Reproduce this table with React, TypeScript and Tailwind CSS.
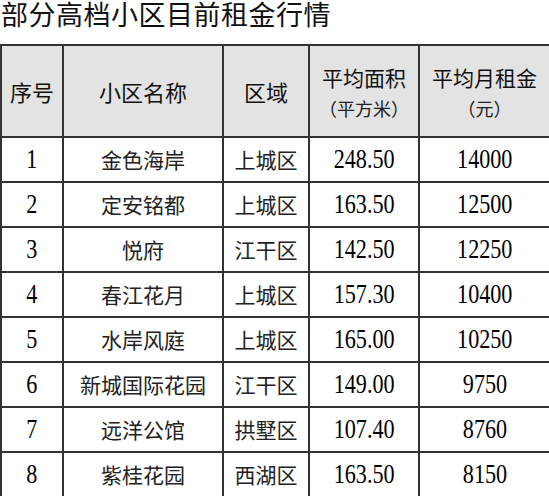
import React from 'react'

const rows = [
  ['1', '金色海岸', '上城区', '248.50', '14000'],
  ['2', '定安铭都', '上城区', '163.50', '12500'],
  ['3', '悦府', '江干区', '142.50', '12250'],
  ['4', '春江花月', '上城区', '157.30', '10400'],
  ['5', '水岸风庭', '上城区', '165.00', '10250'],
  ['6', '新城国际花园', '江干区', '149.00', '9750'],
  ['7', '远洋公馆', '拱墅区', '107.40', '8760'],
  ['8', '紫桂花园', '西湖区', '163.50', '8150'],
]

const cjk = "font-['Noto_Sans_CJK_SC',sans-serif]"
const num = "inline-block scale-x-[0.82] font-['Liberation_Serif',serif] text-[27px] leading-none text-black"

function Num({ v }: { v: string }) {
  return <span className={num}>{v}</span>
}

export default function App() {
  return (
    <main className={`w-[549px] h-[496px] overflow-hidden bg-white ${cjk}`}>
      <h1 className="h-[44px] pl-[1px] text-[27px] leading-[40px] -mt-[6px] mb-[6px] text-[#111] tracking-[0.5px]">部分高档小区目前租金行情</h1>
      <table className="w-[549px] table-fixed border-collapse text-center">
        <colgroup>
          <col className="w-[62px]" />
          <col className="w-[160px]" />
          <col className="w-[86px]" />
          <col className="w-[110px]" />
          <col className="w-[131px]" />
        </colgroup>
        <thead>
          <tr className="h-[92px] bg-[#e3e3e3] text-[22px] text-[#111]">
            <th className="border-2 border-[#333] font-normal">序号</th>
            <th className="border-2 border-[#333] font-normal">小区名称</th>
            <th className="border-2 border-[#333] font-normal">区域</th>
            <th className="border-2 border-[#333] font-normal">
              <div className="flex flex-col items-center gap-[6px]">
                <span className="text-[21px] leading-[28px]">平均面积</span>
                <span className="text-[18px] leading-[22px] text-[#222]">（平方米）</span>
              </div>
            </th>
            <th className="border-2 border-[#333] font-normal">
              <div className="flex flex-col items-center gap-[6px]">
                <span className="text-[21px] leading-[28px]">平均月租金</span>
                <span className="text-[18px] leading-[22px] text-[#222]">（元）</span>
              </div>
            </th>
          </tr>
        </thead>
        <tbody>
          {rows.map(r => (
            <tr key={r[0]} className="h-[45px] text-[21px] text-[#222]">
              <td className="border-2 border-[#333]"><Num v={r[0]} /></td>
              <td className="border-2 border-[#333] leading-none">{r[1]}</td>
              <td className="border-2 border-[#333] leading-none">{r[2]}</td>
              <td className="border-2 border-[#333]"><Num v={r[3]} /></td>
              <td className="border-2 border-[#333]"><Num v={r[4]} /></td>
            </tr>
          ))}
        </tbody>
      </table>
    </main>
  )
}
